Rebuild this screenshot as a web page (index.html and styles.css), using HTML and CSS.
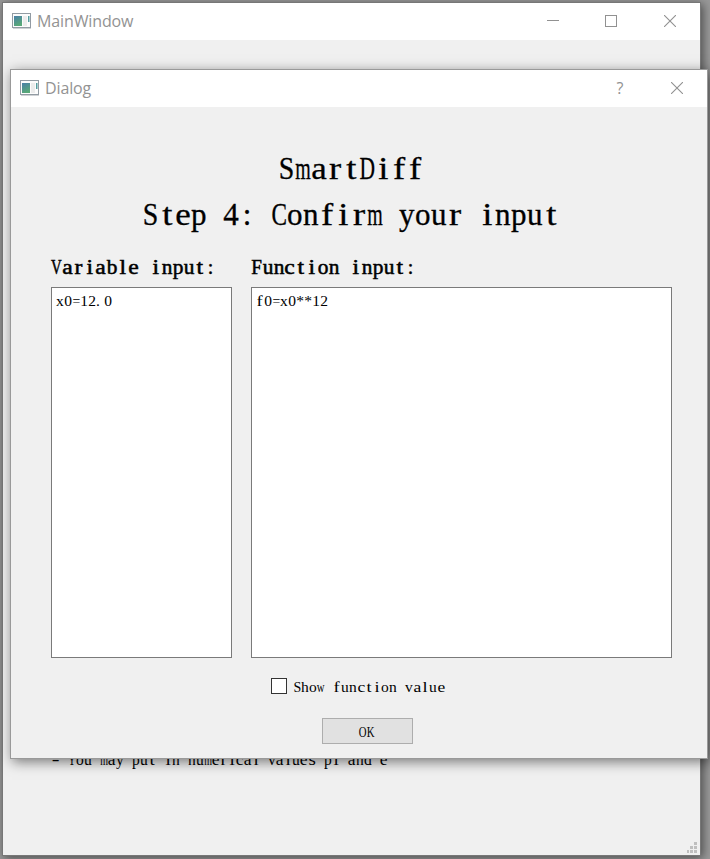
FILE: index.html
```html
<!DOCTYPE html>
<html lang="en">
<head>
<meta charset="utf-8">
<title>SmartDiff</title>
<link rel="stylesheet" href="styles.css">
</head>
<body>
<svg class="defs" width="0" height="0">
  <defs>
    <linearGradient id="screen" x1="0" y1="0" x2="0.4" y2="1">
      <stop offset="0" stop-color="#4a7fa8"/>
      <stop offset="1" stop-color="#58a878"/>
    </linearGradient>
    <symbol id="app" viewBox="0 0 20 16">
      <rect x="0.5" y="0.5" width="18" height="14" fill="#fcfcfc" stroke="#929ba3"/>
      <path d="M1 15.5h18" stroke="#cfd2d5"/>
      <rect x="2" y="3" width="8" height="10" fill="url(#screen)"/>
      <rect x="11" y="3" width="4" height="10" fill="#ececec"/>
      <rect x="16" y="3" width="1.5" height="6" fill="#559da0"/>
    </symbol>
    <symbol id="close" viewBox="0 0 12 12">
      <path d="M0 0L12 12M12 0L0 12" stroke="#919191" stroke-width="1.1" fill="none"/>
    </symbol>
  </defs>
</svg>
<main class="window">
  <header class="titlebar">
    <svg class="app-icon" width="20" height="16"><use href="#app"/></svg>
    <span class="caption">MainWindow</span>
    <div class="controls">
      <svg width="12" height="12"><path d="M0 5.5h12" stroke="#919191"/></svg>
      <svg width="12" height="12"><rect x="0.5" y="0.5" width="11" height="11" fill="none" stroke="#919191"/></svg>
      <svg width="12" height="12"><use href="#close"/></svg>
    </div>
  </header>
  <div class="body">
    <p class="note mono">- You may put in numerical values pi and e</p>
    <svg class="grip" width="11" height="11" fill="#bfbfbf"><path d="M7 0h3v3h-3zM3 4h3v3h-3zM7 4h3v3h-3zM0 8h2v3h-2zM3 8h3v3h-3zM7 8h3v3h-3z"/></svg>
  </div>
</main>
<section class="dialog">
  <header class="titlebar">
    <svg class="app-icon" width="20" height="16"><use href="#app"/></svg>
    <span class="caption">Dialog</span>
    <div class="controls">
      <span class="help">?</span>
      <svg width="12" height="12"><use href="#close"/></svg>
    </div>
  </header>
  <div class="content">
    <h1 class="title mono">SmartDiff</h1>
    <h2 class="title mono">Step 4: Confirm your input</h2>
    <div class="fields">
      <div class="field">
        <div class="label mono">Variable input:</div>
        <div class="box mono">x0=12.0</div>
      </div>
      <div class="field">
        <div class="label mono">Function input:</div>
        <div class="box mono">f0=x0**12</div>
      </div>
    </div>
    <label class="option"><span class="check"></span><span class="mono">Show function value</span></label>
    <button class="ok"><span class="mono">OK</span></button>
  </div>
</section>
<script src="script.js"></script>
</body>
</html>
```
FILE: styles.css
```css
* { box-sizing: border-box; margin: 0; }
body {
  width: 710px;
  height: 859px;
  padding: 2px 0 0 2px;
  overflow: hidden;
  background: #999;
  font-family: "Liberation Serif", serif;
  color: #000;
}
.defs { position: absolute; }
.window {
  display: flex;
  flex-direction: column;
  width: 699px;
  height: 854px;
  background: #f0f0f0;
  border: 1px solid #777;
  box-shadow: 2px 2px 9px rgba(0, 0, 0, .5);
}
.titlebar {
  display: flex;
  align-items: center;
  flex: none;
  height: 37px;
  padding: 0 0 1px 9px;
  background: #fff;
}
.app-icon { margin-right: 5px; }
.caption {
  font: 16px/22px "Open Sans", "Noto Sans", sans-serif;
  letter-spacing: -.12px;
  color: #939393;
}
.controls {
  display: flex;
  align-items: center;
  gap: 47px;
  margin-left: auto;
  padding-right: 24px;
}
.controls svg:first-child { margin-right: -1px; }
.dialog .controls { gap: 44px; }
.help {
  width: 14px;
  text-align: center;
  font: 16px/22px "Open Sans", sans-serif;
  color: #919191;
}
.body {
  display: flex;
  flex-direction: column;
  justify-content: space-between;
  flex: 1;
  padding: 711px 2px 2px 49px;
}
.note { font-size: 16px; line-height: 18px; }
.grip { align-self: flex-end; }
.mono { --cell: 8; white-space: nowrap; }
.mono .cell {
  display: inline-flex;
  justify-content: center;
  white-space: pre;
}
.mono .glyph { flex: none; }
.dialog {
  position: absolute;
  left: 10px;
  top: 69px;
  width: 698px;
  height: 690px;
  background: #f0f0f0;
  border: 1px solid #999;
  box-shadow: 2px 3px 12px rgba(0, 0, 0, .5);
}
.content {
  display: flex;
  flex-direction: column;
  align-items: center;
  padding: 39px 35px 0 40px;
}
.title {
  --cell: 16;
  margin-right: 21px;
  font-size: 31px;
  font-weight: 400;
  line-height: 46px;
  -webkit-text-stroke: .3px #000;
}
.fields {
  display: grid;
  grid-template-columns: 181px 421px;
  gap: 19px;
  align-self: stretch;
  margin-top: 18px;
}
.label {
  --cell: 11;
  height: 31px;
  font-size: 20px;
  line-height: 23px;
  -webkit-text-stroke: .5px #000;
}
.box {
  height: 371px;
  padding: 4px 4px;
  background: #fff;
  border: 1px solid #7a7a7a;
  font-size: 15.5px;
  line-height: 18px;
}
.option {
  display: flex;
  align-items: center;
  gap: 6px;
  height: 18px;
  margin: 19px 0 0 -7px;
  font-size: 15.5px;
  line-height: 18px;
}
.option .mono { padding-top: 2px; }
.check { width: 16px; height: 16px; background: #fff; border: 1px solid #333; }
.ok {
  width: 91px;
  height: 26px;
  margin: 23px 0 0 12px;
  padding: 2px 2px 0 0;
  background: #e1e1e1;
  border: 1px solid #adadad;
  font: 15.5px/18px "Liberation Serif", serif;
  color: #000;
}
```
FILE: script.js
```js
// Set text on a fixed character grid: every glyph is fitted to and centred in its cell.
document.querySelectorAll('.mono').forEach((el) => {
  const cell = Number(getComputedStyle(el).getPropertyValue('--cell'));
  const chars = [...el.textContent];
  el.textContent = '';
  chars.forEach((char) => {
    const box = document.createElement('span');
    const glyph = document.createElement('span');
    box.className = 'cell';
    glyph.className = 'glyph';
    glyph.textContent = char;
    box.append(glyph);
    el.append(box);
    box.style.width = cell + 'px';
    if (char === '.') box.style.justifyContent = 'flex-start';
    const natural = glyph.getBoundingClientRect().width;
    const limit = char === '-' ? 1.6 : /[a-z]/.test(char) ? 1.18 : 1;
    const scale = Math.min(limit, (cell * 0.97) / natural);
    glyph.style.transform = `scaleX(${scale.toFixed(3)})`;
  });
});
```
